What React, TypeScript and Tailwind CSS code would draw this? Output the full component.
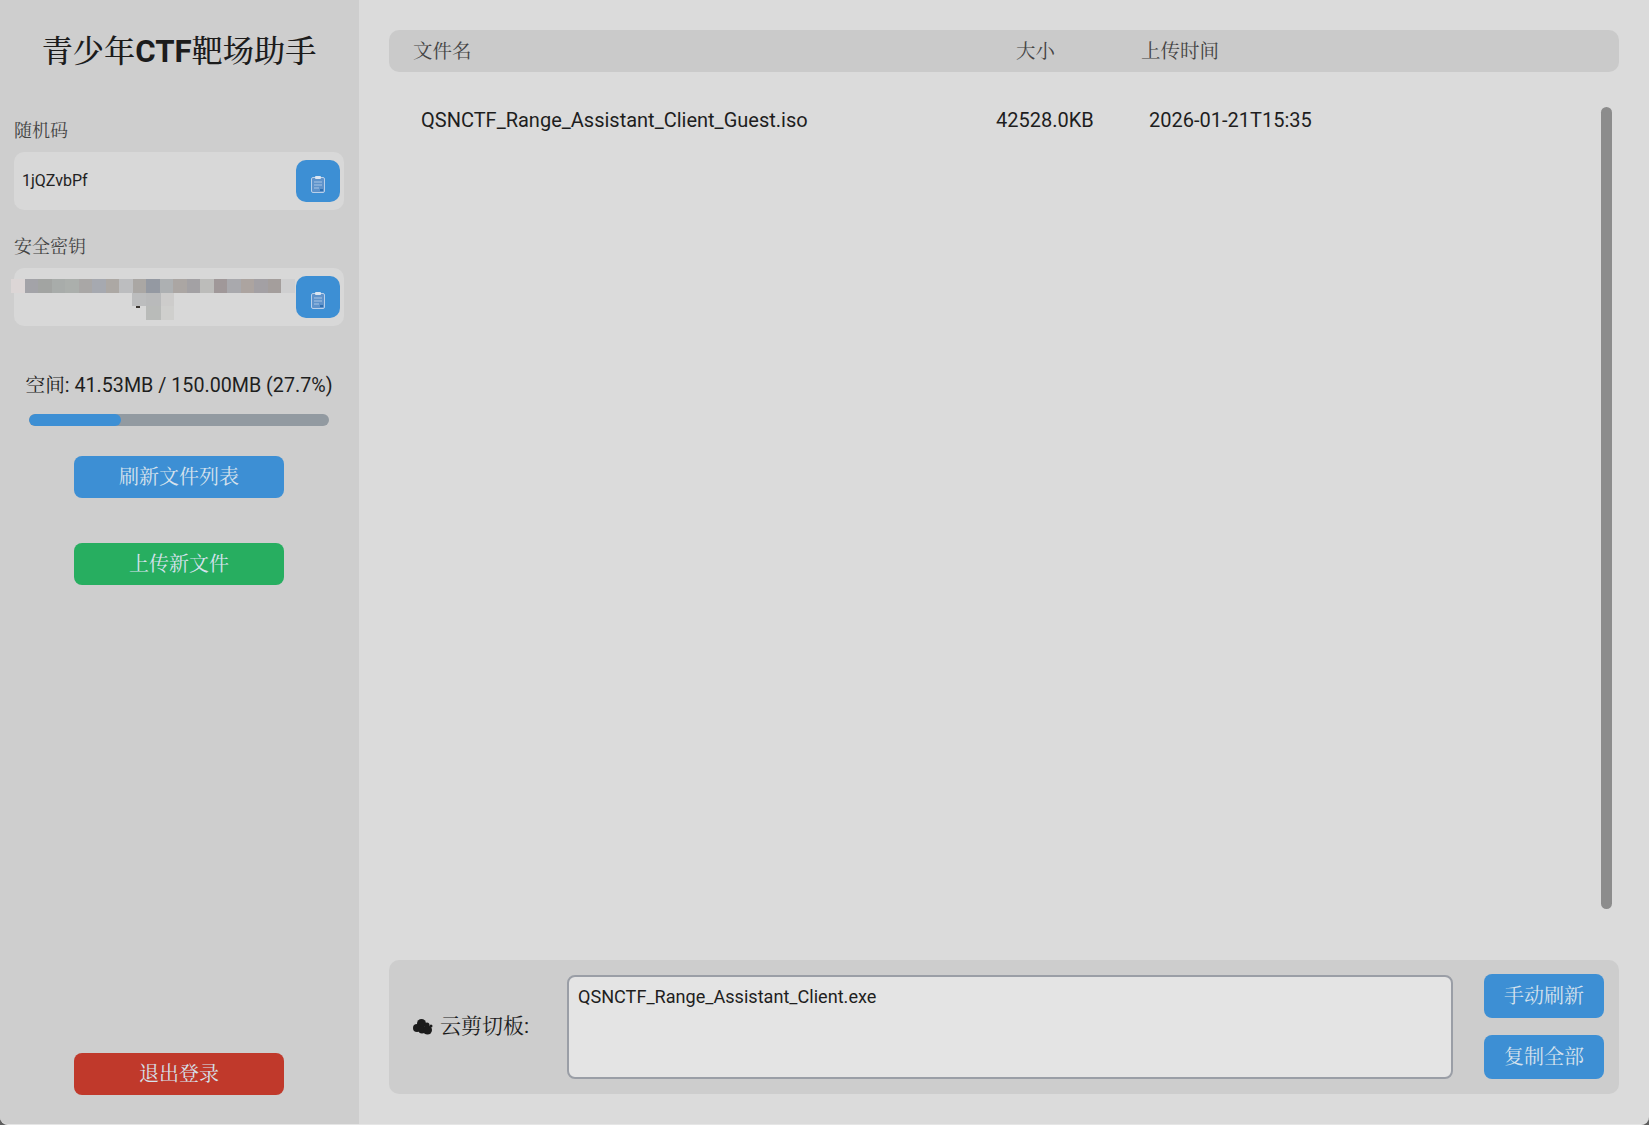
const fontStack = "font-['Roboto','Noto_Serif_CJK_SC','Noto_Sans_CJK_SC',serif]";

const ClipboardIcon = () => (
  <svg width="14" height="17" viewBox="0 0 14 17" fill="none">
    <rect x="0.5" y="1.5" width="13" height="15" rx="1.5" fill="#5f93cb" stroke="#b9d0ea" />
    <rect x="4" y="0" width="6" height="3" rx="1" fill="#dce6f1" />
    <path d="M3 6h8M3 9h8M3 12h5" stroke="#a9c6e6" />
    <path d="M9 14h3" stroke="#2f6fb0" strokeWidth="2" />
  </svg>
);

const CloudIcon = () => (
  <svg width="20" height="16" viewBox="0 0 20 16" fill="#1c1c1c">
    <circle cx="8.5" cy="4.5" r="4.5" />
    <circle cx="4" cy="9" r="4" />
    <circle cx="9" cy="11" r="3.5" />
    <circle cx="14.5" cy="11" r="4.5" />
    <circle cx="14" cy="6" r="2.5" />
    <circle cx="18" cy="7" r="1.5" />
  </svg>
);

const mosaicTop = [
  "#dcd6d6", "#a3a3a8", "#a2a4a2", "#a8acaa", "#abafac", "#a9a7a6", "#a6a9b0", "#aca8a4", "#bcbdbf",
  "#aaa7a4", "#9499a2", "#adb0b2", "#aba6a3", "#a3a1a4", "#bcbcba", "#a09899", "#a9a9ad", "#aca4a0",
  "#a3a0a4", "#a49e9c", "#cfcfd0",
];

const CopyField = ({ label, value, mosaic }: { label: string; value?: string; mosaic?: boolean }) => (
  <div className="mb-6">
    <div className="text-[18px] leading-[26px] mb-2 text-[#444]">{label}</div>
    <div className="relative flex items-center justify-between h-[58px] pl-2 pr-1 rounded-[10px] bg-[#d8d8d8]">
      <span className="text-[16px] text-[#222]">{value}</span>
      {mosaic && (
        <div className="absolute left-[-3px] top-[11px]">
          <div className="flex h-[14px]">
            {mosaicTop.map((c, i) => (
              <div key={i} className="w-[13.5px] h-full" style={{ backgroundColor: c }} />
            ))}
          </div>
          <div className="flex h-[13px] ml-[121px]">
            <div className="w-[14px] bg-[#bcbdbe]" />
            <div className="w-[15px] bg-[#b9babb]" />
            <div className="w-[13px] bg-[#cdcccb]" />
          </div>
          <div className="relative flex h-[14px] ml-[135px]">
            <div className="absolute left-[-10px] top-0 w-1 h-[2px] bg-[#3a3530]" />
            <div className="w-[15px] bg-[#b9bbb9]" />
            <div className="w-[13px] bg-[#cfcfcd]" />
          </div>
        </div>
      )}
      <button className="flex items-center justify-center w-11 h-[42px] rounded-[10px] bg-[#3d8fd4] pt-[6px]">
        <ClipboardIcon />
      </button>
    </div>
  </div>
);

const SideButton = ({ text, color }: { text: string; color: string }) => (
  <button className={`w-[210px] h-[42px] rounded-lg text-[20px] text-[#d6e2ed] ${color}`}>{text}</button>
);

export default function App() {
  return (
    <div className="w-[1649px] h-[1125px] bg-[#5f5f5f] overflow-hidden">
      <div className={`flex h-full rounded-b-lg overflow-hidden border-b border-[#e6e6e6] bg-[#dbdbdb] text-[#1e1e1e] ${fontStack}`}>
        <aside className="flex flex-col w-[359px] h-full pl-[14px] pr-[15px] bg-[#cecece]">
          <h1 className="mt-[32px] text-center text-[31.2px] leading-10 font-medium text-[#1c1c1c]">
            青少年<span className="font-bold">CTF</span>靶场助手
          </h1>
          <div className="mt-[46px]">
            <CopyField label="随机码" value="1jQZvbPf" />
            <CopyField label="安全密钥" mosaic />
          </div>
          <div className="mt-[22px] text-center text-[19.7px] leading-7">空间: 41.53MB / 150.00MB (27.7%)</div>
          <div className="mx-[15px] mt-[14px] h-3 rounded-full bg-[#929aa1] overflow-hidden">
            <div className="h-full rounded-full bg-[#3d8fd4]" style={{ width: "30.7%" }} />
          </div>
          <div className="mt-[30px] flex flex-col items-center gap-[45px]">
            <SideButton text="刷新文件列表" color="bg-[#3d8fd4]" />
            <SideButton text="上传新文件" color="bg-[#27ae60]" />
          </div>
          <div className="mt-auto mb-[29px] flex justify-center">
            <SideButton text="退出登录" color="bg-[#c0392b]" />
          </div>
        </aside>

        <main className="flex flex-col flex-1 min-w-0 pt-[30px] pb-[30px] px-[30px]">
          <div className="flex items-center h-[42px] pt-[2px] rounded-[10px] bg-[#cacaca] text-[19.5px] text-[#444]">
            <div className="w-[627px] pl-6">文件名</div>
            <div className="w-[125px]">大小</div>
            <div>上传时间</div>
          </div>
          <div className="flex flex-1 min-h-0 mt-[35px] mb-[51px]">
            <div className="flex flex-1 items-start pl-8 pt-px text-[20px] leading-6">
              <div className="w-[575px]">QSNCTF_Range_Assistant_Client_Guest.iso</div>
              <div className="w-[153px]">42528.0KB</div>
              <div>2026-01-21T15:35</div>
            </div>
            <div className="w-[11px] mr-[7px] rounded-full bg-[#8c8c8c]" />
          </div>
          <div className="flex items-center h-[134px] pl-6 pr-[15px] rounded-[10px] bg-[#cdcdcd]">
            <div className="flex items-center gap-[7px] w-[155px] text-[21px] text-[#1c1c1c]">
              <CloudIcon />
              <span>云剪切板:</span>
            </div>
            <textarea
              readOnly
              value="QSNCTF_Range_Assistant_Client.exe"
              className="flex-1 h-[104px] -ml-px px-[9px] py-2 rounded-lg border-2 border-[#9a9ea6] bg-[#e4e4e4] text-[18.1px] leading-6 text-[#1e1e1e] resize-none outline-none"
            />
            <div className="flex flex-col gap-[17px] ml-[31px] -mt-px">
              <button className="w-[120px] h-11 rounded-lg bg-[#3d8fd4] text-[20px] text-[#d6e2ed]">手动刷新</button>
              <button className="w-[120px] h-11 rounded-lg bg-[#3d8fd4] text-[20px] text-[#d6e2ed]">复制全部</button>
            </div>
          </div>
        </main>
      </div>
    </div>
  );
}
